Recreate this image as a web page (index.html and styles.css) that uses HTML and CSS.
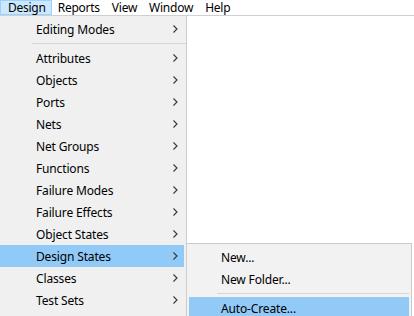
FILE: index.html
```html
<!DOCTYPE html>
<html>
<head>
<meta charset="utf-8">
<link rel="stylesheet" href="styles.css">
</head>
<body>
<div class="menubar">
  <div class="mb-item active">Design</div>
  <div class="mb-item">Reports</div>
  <div class="mb-item">View</div>
  <div class="mb-item">Window</div>
  <div class="mb-item">Help</div>
</div>
<div class="menu main">
  <div class="item"><span class="label">Editing Modes</span><span class="arrow"><svg width="5" height="8" viewBox="0 0 5 8"><path d="M0.5 0.5 L4 4 L0.5 7.5" fill="none" stroke="#333" stroke-width="1.1"/></svg></span></div>
  <div class="sep"></div>
  <div class="item"><span class="label">Attributes</span><span class="arrow"><svg width="5" height="8" viewBox="0 0 5 8"><path d="M0.5 0.5 L4 4 L0.5 7.5" fill="none" stroke="#333" stroke-width="1.1"/></svg></span></div>
  <div class="item"><span class="label">Objects</span><span class="arrow"><svg width="5" height="8" viewBox="0 0 5 8"><path d="M0.5 0.5 L4 4 L0.5 7.5" fill="none" stroke="#333" stroke-width="1.1"/></svg></span></div>
  <div class="item"><span class="label">Ports</span><span class="arrow"><svg width="5" height="8" viewBox="0 0 5 8"><path d="M0.5 0.5 L4 4 L0.5 7.5" fill="none" stroke="#333" stroke-width="1.1"/></svg></span></div>
  <div class="item"><span class="label">Nets</span><span class="arrow"><svg width="5" height="8" viewBox="0 0 5 8"><path d="M0.5 0.5 L4 4 L0.5 7.5" fill="none" stroke="#333" stroke-width="1.1"/></svg></span></div>
  <div class="item"><span class="label">Net Groups</span><span class="arrow"><svg width="5" height="8" viewBox="0 0 5 8"><path d="M0.5 0.5 L4 4 L0.5 7.5" fill="none" stroke="#333" stroke-width="1.1"/></svg></span></div>
  <div class="item"><span class="label">Functions</span><span class="arrow"><svg width="5" height="8" viewBox="0 0 5 8"><path d="M0.5 0.5 L4 4 L0.5 7.5" fill="none" stroke="#333" stroke-width="1.1"/></svg></span></div>
  <div class="item"><span class="label">Failure Modes</span><span class="arrow"><svg width="5" height="8" viewBox="0 0 5 8"><path d="M0.5 0.5 L4 4 L0.5 7.5" fill="none" stroke="#333" stroke-width="1.1"/></svg></span></div>
  <div class="item"><span class="label">Failure Effects</span><span class="arrow"><svg width="5" height="8" viewBox="0 0 5 8"><path d="M0.5 0.5 L4 4 L0.5 7.5" fill="none" stroke="#333" stroke-width="1.1"/></svg></span></div>
  <div class="item"><span class="label">Object States</span><span class="arrow"><svg width="5" height="8" viewBox="0 0 5 8"><path d="M0.5 0.5 L4 4 L0.5 7.5" fill="none" stroke="#333" stroke-width="1.1"/></svg></span></div>
  <div class="item hl"><span class="label">Design States</span><span class="arrow"><svg width="5" height="8" viewBox="0 0 5 8"><path d="M0.5 0.5 L4 4 L0.5 7.5" fill="none" stroke="#333" stroke-width="1.1"/></svg></span></div>
  <div class="item"><span class="label">Classes</span><span class="arrow"><svg width="5" height="8" viewBox="0 0 5 8"><path d="M0.5 0.5 L4 4 L0.5 7.5" fill="none" stroke="#333" stroke-width="1.1"/></svg></span></div>
  <div class="item"><span class="label">Test Sets</span><span class="arrow"><svg width="5" height="8" viewBox="0 0 5 8"><path d="M0.5 0.5 L4 4 L0.5 7.5" fill="none" stroke="#333" stroke-width="1.1"/></svg></span></div>
</div>
<div class="menu sub">
  <div class="item"><span class="label">New...</span></div>
  <div class="item"><span class="label">New Folder...</span></div>
  <div class="sep"></div>
  <div class="item hl"><span class="label">Auto-Create...</span></div>
</div>
</body>
</html>
```
FILE: styles.css
```css
html, body {
  margin: 0;
  padding: 0;
  background: #ffffff;
  font-family: "Noto Sans", "Liberation Sans", sans-serif;
  font-size: 12px;
  color: #000;
  overflow: hidden;
  width: 414px;
  height: 316px;
}
.menubar {
  display: flex;
  height: 15px;
  border-bottom: 1px solid #d0d0d0;
  background: #fff;
  letter-spacing: -0.25px;
}
.mb-item {
  padding: 0 5px;
  line-height: 14px;
  height: 15px;
  box-sizing: border-box;
  border: 1px solid transparent;
  color: #000;
}
.mb-item.active {
  background: #cce8ff;
  border-color: #99d1ff;
  padding: 0 5px 0 7px;
}
.menu {
  position: absolute;
  background: #f0f0f0;
  box-sizing: border-box;
}
.main {
  left: 0;
  top: 16px;
  width: 187px;
  height: 300px;
  padding-top: 2px;
  border-right: 1px solid #cccccc;
  letter-spacing: -0.15px;
}
.sub {
  left: 186px;
  top: 243px;
  width: 226px;
  height: 80px;
  padding: 2px 2px 0 2px;
  border: 1px solid #cccccc;
  background: #f2f2f2;
  letter-spacing: -0.15px;
}
.item {
  display: flex;
  align-items: center;
  height: 22px;
}
.main .item { margin-right: 2px; }
.item .label {
  flex: 1;
  padding-left: 36px;
  white-space: nowrap;
}
.sub .item .label { padding-left: 32px; }
.item .arrow {
  width: 11px;
  display: flex;
  align-items: center;
}
.item.hl {
  background: #91c9f7;
}
.sep {
  height: 7px;
  display: flex;
  align-items: center;
}
.sep::after {
  content: "";
  display: block;
  height: 1px;
  background: #d7d7d7;
  margin-left: 32px;
  flex: 1;
}
.sub .sep::after { margin-left: 28px; }
```
